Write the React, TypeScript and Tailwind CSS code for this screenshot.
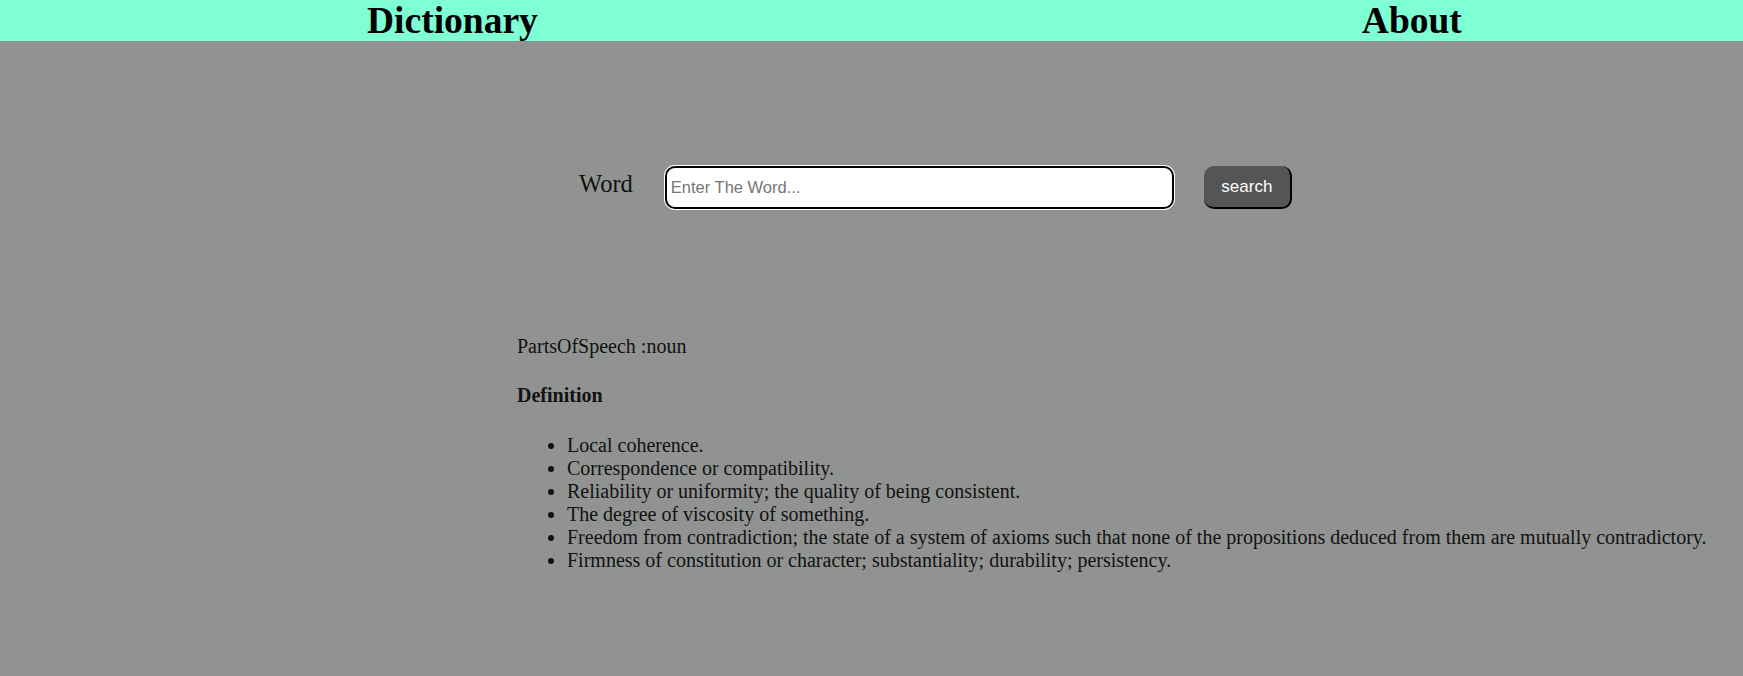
export default function App() {
  const defs = [
    "Local coherence.",
    "Correspondence or compatibility.",
    "Reliability or uniformity; the quality of being consistent.",
    "The degree of viscosity of something.",
    "Freedom from contradiction; the state of a system of axioms such that none of the propositions deduced from them are mutually contradictory.",
    "Firmness of constitution or character; substantiality; durability; persistency.",
  ]
  return (
    <div className="min-h-screen bg-[#919392] font-['Liberation_Serif',serif] text-black">
      <header className="flex h-[41px] items-center bg-[#7fffd4] text-[37.5px] font-bold leading-[41px]">
        <a className="ml-[367px]">Dictionary</a>
        <a className="ml-[824px]">About</a>
      </header>
      <div className="ml-[579px] mt-[125px] flex items-center">
        <label className="mb-[6px] text-[24.5px] text-[#111]">Word</label>
        <input
          placeholder="Enter The Word..."
          className="ml-[32px] h-[43px] w-[509px] rounded-[10px] border-2 border-black bg-white px-[4px] font-['Liberation_Sans',sans-serif] text-[16.5px] ring-1 ring-white outline-none placeholder:text-[#757575]"
        />
        <button className="ml-[30px] h-[43px] w-[88px] rounded-[10px] border-r-2 border-b-2 border-black bg-[#555555] font-['Liberation_Sans',sans-serif] text-[17px] text-white">
          search
        </button>
      </div>
      <div className="ml-[517px] mt-[126px] text-[20px] leading-[23px] text-[#111]">
        <p>PartsOfSpeech :noun</p>
        <h4 className="mt-[26px] font-bold">Definition</h4>
        <ul className="mt-[27px] list-disc pl-[50px]">
          {defs.map((d) => (
            <li key={d}>{d}</li>
          ))}
        </ul>
      </div>
    </div>
  )
}
